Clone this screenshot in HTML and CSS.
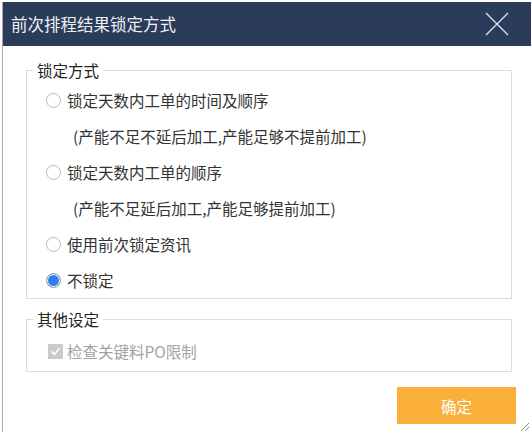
FILE: index.html
```html
<!DOCTYPE html>
<html lang="zh-CN">
<head>
    <meta charset="UTF-8">
    <meta name="viewport" content="width=device-width, initial-scale=1.0">
    <title>前次排程结果锁定方式</title>
    <link rel="stylesheet" href="styles.css">
</head>
<body>
    <div class="dialog">
        <div class="titlebar">
            <span class="title">前次排程结果锁定方式</span>
            <svg class="close" width="24" height="24" viewBox="0 0 24 24">
                <path d="M1 1 L23 23 M23 1 L1 23" stroke="#dfe3ea" stroke-width="1.3" fill="none"/>
            </svg>
        </div>
        <div class="content">
            <fieldset class="group">
                <legend>锁定方式</legend>
                <label class="row">
                    <span class="radio"></span>锁定天数内工单的时间及顺序
                </label>
                <div class="row note">(产能不足不延后加工,产能足够不提前加工)</div>
                <label class="row">
                    <span class="radio"></span>锁定天数内工单的顺序
                </label>
                <div class="row note">(产能不足延后加工,产能足够提前加工)</div>
                <label class="row">
                    <span class="radio"></span>使用前次锁定资讯
                </label>
                <label class="row">
                    <span class="radio checked"></span>不锁定
                </label>
            </fieldset>
            <fieldset class="group other">
                <legend>其他设定</legend>
                <label class="row disabled">
                    <span class="checkbox">
                        <svg width="15" height="15" viewBox="0 0 15 15">
                            <path d="M3.5 7.5 L6.3 10.3 L11.5 4.5" stroke="#fff" stroke-width="1.6" fill="none"/>
                        </svg>
                    </span>检查关键料PO限制
                </label>
            </fieldset>
            <div class="actions">
                <button class="btn-ok">确定</button>
            </div>
        </div>
        <svg class="grip" width="12" height="12" viewBox="0 0 12 12">
            <path d="M11 3 L3 11 M11 7 L7 11" stroke="#888" stroke-width="1" fill="none"/>
        </svg>
    </div>
</body>
</html>
```

FILE: styles.css
```css
body {
    margin: 0;
    background-color: #fff;
    font-family: "Microsoft YaHei", "Noto Sans CJK SC", sans-serif;
    color: #333;
}
.dialog {
    position: relative;
    margin: 2px 0 0 2px;
    height: 430px;
    border-left: 1px solid #a8a8a8;
    background-color: #fff;
}
.titlebar {
    height: 44px;
    background-color: #2b3b5a;
    color: #eef0f4;
    display: flex;
    align-items: center;
    justify-content: space-between;
    padding-left: 8px;
}
.title {
    font-size: 16.5px;
}
.close {
    margin-right: 22px;
}
.content {
    padding: 14px 19px 0 23px;
}
.group {
    margin: 0;
    padding: 2px 0 0 6px;
    border: 1px solid #dcdcdc;
}
.group legend {
    padding: 0 4px;
    font-size: 15.5px;
    line-height: 20px;
    color: #222;
}
.row {
    display: flex;
    align-items: center;
    height: 36px;
    font-size: 15.5px;
    color: #333;
}
.note {
    padding-left: 40px;
}
.radio {
    width: 13px;
    height: 13px;
    border: 1px solid #b9b9b9;
    border-radius: 50%;
    margin: 0 6px 0 13px;
    box-sizing: content-box;
    flex-shrink: 0;
}
.radio.checked {
    background-color: #2f80ed;
    box-shadow: inset 0 0 0 1px #fff;
    border-color: #a9a9a9;
}
.other {
    margin-top: 10px;
    padding-bottom: 0;
}
.other .row {
    height: 40px;
}
.disabled {
    color: #a3a3a3;
}
.checkbox {
    width: 15px;
    height: 15px;
    background-color: #cacaca;
    margin: 0 4px 0 15px;
    display: flex;
}
.actions {
    display: flex;
    justify-content: flex-end;
    margin-top: 15px;
    margin-right: -4px;
}
.btn-ok {
    width: 119px;
    height: 37px;
    border: none;
    background-color: #f9af38;
    color: #fff;
    font-family: inherit;
    font-size: 15.5px;
}
.grip {
    position: absolute;
    right: 1px;
    bottom: 0;
}
```
